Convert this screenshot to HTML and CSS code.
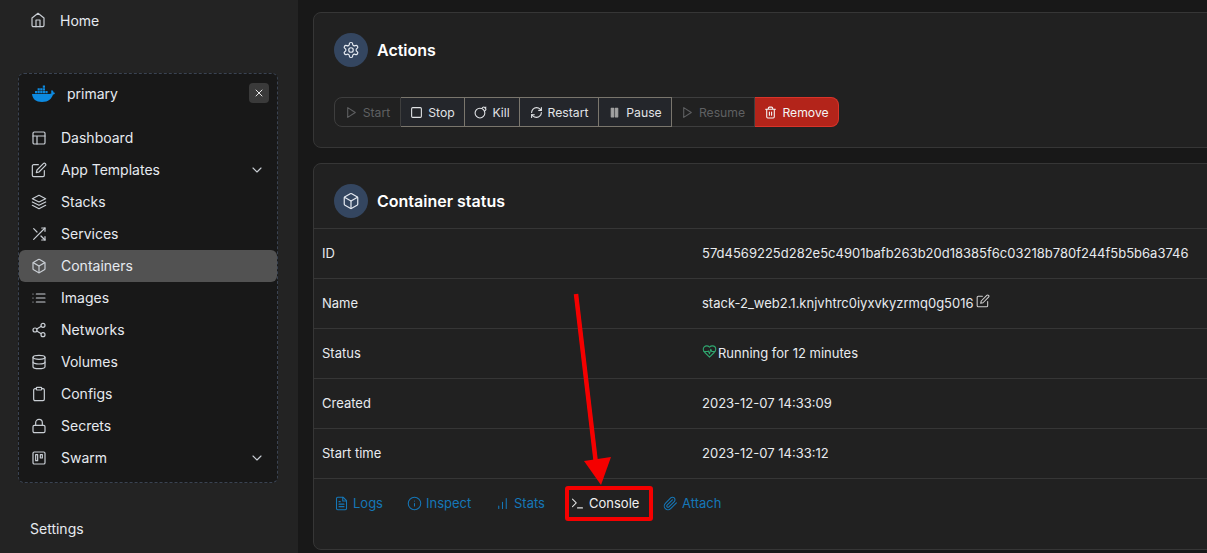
FILE: index.html
```html
<!DOCTYPE html>
<html lang="en">
<head>
<meta charset="utf-8">
<title>Container details</title>
<link rel="stylesheet" href="styles.css">
</head>
<body>
<svg class="sprite" xmlns="http://www.w3.org/2000/svg">
  <symbol id="i-home" viewBox="0 0 24 24"><path d="m3 9 9-7 9 7v11a2 2 0 0 1-2 2H5a2 2 0 0 1-2-2z"/><polyline points="9 22 9 12 15 12 15 22"/></symbol>
  <symbol id="i-layout" viewBox="0 0 24 24"><rect x="3" y="3" width="18" height="18" rx="2"/><path d="M3 9h18M9 21V9"/></symbol>
  <symbol id="i-edit" viewBox="0 0 24 24"><path d="M11 4H4a2 2 0 0 0-2 2v14a2 2 0 0 0 2 2h14a2 2 0 0 0 2-2v-7"/><path d="M18.5 2.5a2.121 2.121 0 0 1 3 3L12 15l-4 1 1-4 9.5-9.5z"/></symbol>
  <symbol id="i-layers" viewBox="0 0 24 24"><path d="m12 2 10 5-10 5L2 7z"/><path d="m2 12 10 5 10-5"/><path d="m2 17 10 5 10-5"/></symbol>
  <symbol id="i-shuffle" viewBox="0 0 24 24"><polyline points="16 3 21 3 21 8"/><line x1="4" y1="20" x2="21" y2="3"/><polyline points="21 16 21 21 16 21"/><line x1="15" y1="15" x2="21" y2="21"/><line x1="4" y1="4" x2="9" y2="9"/></symbol>
  <symbol id="i-box" viewBox="0 0 24 24"><path d="M21 16V8a2 2 0 0 0-1-1.730l-7-4a2 2 0 0 0-2 0l-7 4A2 2 0 0 0 3 8v8a2 2 0 0 0 1 1.730l7 4a2 2 0 0 0 2 0l7-4A2 2 0 0 0 21 16z"/><polyline points="3.270 6.960 12 12.010 20.730 6.960"/><line x1="12" y1="22.080" x2="12" y2="12"/></symbol>
  <symbol id="i-list" viewBox="0 0 24 24"><path d="M8 6h13M8 12h13M8 18h13M3 6h.01M3 12h.01M3 18h.01"/></symbol>
  <symbol id="i-share" viewBox="0 0 24 24"><circle cx="18" cy="5" r="3"/><circle cx="6" cy="12" r="3"/><circle cx="18" cy="19" r="3"/><line x1="8.590" y1="13.510" x2="15.420" y2="17.490"/><line x1="15.410" y1="6.510" x2="8.590" y2="10.490"/></symbol>
  <symbol id="i-database" viewBox="0 0 24 24"><ellipse cx="12" cy="5" rx="9" ry="3"/><path d="M21 12c0 1.660-4 3-9 3s-9-1.340-9-3"/><path d="M3 5v14c0 1.660 4 3 9 3s9-1.340 9-3V5"/></symbol>
  <symbol id="i-clipboard" viewBox="0 0 24 24"><path d="M16 4h2a2 2 0 0 1 2 2v14a2 2 0 0 1-2 2H6a2 2 0 0 1-2-2V6a2 2 0 0 1 2-2h2"/><rect x="8" y="2" width="8" height="4" rx="1"/></symbol>
  <symbol id="i-lock" viewBox="0 0 24 24"><rect x="3" y="11" width="18" height="11" rx="2"/><path d="M7 11V7a5 5 0 0 1 10 0v4"/></symbol>
  <symbol id="i-trello" viewBox="0 0 24 24"><rect x="3" y="3" width="18" height="18" rx="2"/><rect x="7" y="7" width="3" height="9"/><rect x="14" y="7" width="3" height="5"/></symbol>
  <symbol id="i-chevron" viewBox="0 0 24 24"><path d="m6 9 6 6 6-6"/></symbol>
  <symbol id="i-x" viewBox="0 0 24 24"><path d="M18 6 6 18M6 6l12 12"/></symbol>
  <symbol id="i-gear" viewBox="0 0 24 24"><path d="M12.220 2h-.44a2 2 0 0 0-2 2v.18a2 2 0 0 1-1 1.730l-.43.25a2 2 0 0 1-2 0l-.15-.08a2 2 0 0 0-2.730.73l-.22.38a2 2 0 0 0 .73 2.730l.15.1a2 2 0 0 1 1 1.720v.51a2 2 0 0 1-1 1.740l-.15.09a2 2 0 0 0-.73 2.730l.22.38a2 2 0 0 0 2.730.73l.15-.08a2 2 0 0 1 2 0l.43.25a2 2 0 0 1 1 1.730V20a2 2 0 0 0 2 2h.44a2 2 0 0 0 2-2v-.18a2 2 0 0 1 1-1.730l.43-.25a2 2 0 0 1 2 0l.15.08a2 2 0 0 0 2.730-.73l.22-.39a2 2 0 0 0-.73-2.730l-.15-.08a2 2 0 0 1-1-1.740v-.5a2 2 0 0 1 1-1.740l.15-.09a2 2 0 0 0 .73-2.730l-.22-.38a2 2 0 0 0-2.730-.73l-.15.08a2 2 0 0 1-2 0l-.43-.25a2 2 0 0 1-1-1.730V4a2 2 0 0 0-2-2z"/><circle cx="12" cy="12" r="3"/></symbol>
  <symbol id="i-play" viewBox="0 0 24 24"><polygon points="5 3 19 12 5 21 5 3"/></symbol>
  <symbol id="i-square" viewBox="0 0 24 24"><rect x="3" y="3" width="18" height="18" rx="2"/></symbol>
  <symbol id="i-bomb" viewBox="0 0 24 24"><circle cx="11" cy="13" r="9"/><path d="M14.350 4.650 16.300 2.700a2.410 2.410 0 0 1 3.400 0l1.600 1.600a2.400 2.400 0 0 1 0 3.400l-1.950 1.950"/><path d="m22 2-1.500 1.500"/></symbol>
  <symbol id="i-refresh" viewBox="0 0 24 24"><path d="M3 12a9 9 0 0 1 9-9 9.750 9.750 0 0 1 6.740 2.740L21 8"/><path d="M21 3v5h-5"/><path d="M21 12a9 9 0 0 1-9 9 9.750 9.750 0 0 1-6.740-2.740L3 16"/><path d="M8 16H3v5"/></symbol>
  <symbol id="i-pause" viewBox="0 0 24 24"><rect x="6" y="4" width="4.500" height="16" fill="currentColor"/><rect x="13.500" y="4" width="4.500" height="16" fill="currentColor"/></symbol>
  <symbol id="i-trash" viewBox="0 0 24 24"><path d="M3 6h18M19 6v14c0 1-1 2-2 2H7c-1 0-2-1-2-2V6M8 6V4c0-1 1-2 2-2h4c1 0 2 1 2 2v2M10 11v6M14 11v6"/></symbol>
  <symbol id="i-file" viewBox="0 0 24 24"><path d="M14.500 2H6a2 2 0 0 0-2 2v16a2 2 0 0 0 2 2h12a2 2 0 0 0 2-2V7.500L14.500 2z"/><polyline points="14 2 14 8 20 8"/><path d="M16 13H8M16 17H8M10 9H8"/></symbol>
  <symbol id="i-info" viewBox="0 0 24 24"><circle cx="12" cy="12" r="10"/><path d="M12 16v-4M12 8h.01"/></symbol>
  <symbol id="i-bars" viewBox="0 0 24 24"><path d="M12 20V10M18 20V4M6 20v-4"/></symbol>
  <symbol id="i-terminal" viewBox="0 0 24 24"><polyline points="4 17 10 11 4 5"/><line x1="12" y1="19" x2="20" y2="19"/></symbol>
  <symbol id="i-clip" viewBox="0 0 24 24"><path d="m21.440 11.050-9.190 9.190a6 6 0 0 1-8.490-8.490l8.570-8.570A4 4 0 1 1 18 8.840l-8.590 8.570a2 2 0 0 1-2.830-2.830l8.490-8.480"/></symbol>
  <symbol id="i-heart" viewBox="0 0 24 24"><path d="M19 14c1.490-1.460 3-3.210 3-5.500A5.500 5.500 0 0 0 16.500 3c-1.760 0-3 .5-4.500 2-1.500-1.500-2.740-2-4.500-2A5.500 5.500 0 0 0 2 8.500c0 2.300 1.500 4.050 3 5.500l7 7Z"/><path d="M3.220 12H9.500l.5-1 2 4.500 2-7 1.500 3.500h5.270"/></symbol>
</svg>

<div class="app">
  <aside class="sidebar">
    <a class="home-link"><svg class="ico"><use href="#i-home"/></svg><span>Home</span></a>
    <section class="env">
      <header class="env-head">
        <svg class="docker" viewBox="0 0 23 17">
          <path d="M0 9h17.500c.8 0 1.500-.3 2-.7-.5-.8-.5-2.300.3-3.300 1 .6 1.700 1.500 1.800 2.500.6-.2 1.100 0 1.400.5-.4 1-1.200 1.500-2 1.500-1.200 4-4.500 7.500-11 7.500C4 17 .5 14 0 9z"/>
          <path d="M3 6h2.200v2.200H3zM5.600 6h2.200v2.200H5.600zM8.200 6h2.200v2.200H8.200zM10.800 6H13v2.200h-2.200zM13.400 6h2.200v2.200h-2.200zM5.600 3.300h2.200v2.200H5.600zM8.200 3.300h2.200v2.200H8.200zM10.800 3.300H13v2.200h-2.200zM10.800 .6H13v2.200h-2.200z"/>
        </svg>
        <span class="env-name">primary</span>
        <button class="env-close"><svg class="ico-x"><use href="#i-x"/></svg></button>
      </header>
      <nav class="nav">
        <a class="nav-item"><svg class="ico"><use href="#i-layout"/></svg><span>Dashboard</span></a>
        <a class="nav-item"><svg class="ico"><use href="#i-edit"/></svg><span>App Templates</span><svg class="chev"><use href="#i-chevron"/></svg></a>
        <a class="nav-item"><svg class="ico"><use href="#i-layers"/></svg><span>Stacks</span></a>
        <a class="nav-item"><svg class="ico"><use href="#i-shuffle"/></svg><span>Services</span></a>
        <a class="nav-item active"><svg class="ico"><use href="#i-box"/></svg><span>Containers</span></a>
        <a class="nav-item"><svg class="ico"><use href="#i-list"/></svg><span>Images</span></a>
        <a class="nav-item"><svg class="ico"><use href="#i-share"/></svg><span>Networks</span></a>
        <a class="nav-item"><svg class="ico"><use href="#i-database"/></svg><span>Volumes</span></a>
        <a class="nav-item"><svg class="ico"><use href="#i-clipboard"/></svg><span>Configs</span></a>
        <a class="nav-item"><svg class="ico"><use href="#i-lock"/></svg><span>Secrets</span></a>
        <a class="nav-item"><svg class="ico"><use href="#i-trello"/></svg><span>Swarm</span><svg class="chev"><use href="#i-chevron"/></svg></a>
      </nav>
    </section>
    <div class="settings">Settings</div>
  </aside>

  <main class="main">
    <section class="card card-actions">
      <header class="card-head">
        <span class="badge"><svg class="badge-ico"><use href="#i-gear"/></svg></span>
        <h2>Actions</h2>
      </header>
      <div class="btn-group">
        <button class="btn off b-start"><svg><use href="#i-play"/></svg>Start</button>
        <button class="btn b-stop"><svg><use href="#i-square"/></svg>Stop</button>
        <button class="btn b-kill"><svg><use href="#i-bomb"/></svg>Kill</button>
        <button class="btn b-restart"><svg><use href="#i-refresh"/></svg>Restart</button>
        <button class="btn b-pause"><svg><use href="#i-pause"/></svg>Pause</button>
        <button class="btn off b-resume"><svg><use href="#i-play"/></svg>Resume</button>
        <button class="btn danger b-remove"><svg><use href="#i-trash"/></svg>Remove</button>
      </div>
    </section>

    <section class="card card-status">
      <header class="card-head head-status">
        <span class="badge"><svg class="badge-ico"><use href="#i-box"/></svg></span>
        <h2>Container status</h2>
      </header>
      <div class="rows">
        <div class="row"><span>ID</span><span>57d4569225d282e5c4901bafb263b20d18385f6c03218b780f244f5b5b6a3746</span></div>
        <div class="row"><span>Name</span><span class="val-name">stack-2_web2.1.knjvhtrc0iyxvkyzrmq0g5016<svg class="pencil"><use href="#i-edit"/></svg></span></div>
        <div class="row"><span>Status</span><span class="val-status"><svg class="heart"><use href="#i-heart"/></svg>Running for 12 minutes</span></div>
        <div class="row"><span>Created</span><span>2023-12-07 14:33:09</span></div>
        <div class="row"><span>Start time</span><span>2023-12-07 14:33:12</span></div>
      </div>
      <div class="tabs">
        <a class="tab t-logs"><svg><use href="#i-file"/></svg>Logs</a>
        <a class="tab t-inspect"><svg><use href="#i-info"/></svg>Inspect</a>
        <a class="tab t-stats"><svg><use href="#i-bars"/></svg>Stats</a>
        <a class="tab t-console"><svg><use href="#i-terminal"/></svg>Console</a>
        <a class="tab t-attach"><svg><use href="#i-clip"/></svg>Attach</a>
      </div>
    </section>
  </main>
</div>

<div class="highlight"></div>
<svg class="arrow" viewBox="0 0 1207 553">
  <line x1="576" y1="294" x2="596" y2="464"/>
  <polygon points="584,461 611,457 601,485"/>
</svg>
</body>
</html>
```
FILE: styles.css
```css
* { box-sizing: border-box; }
html, body { margin: 0; height: 100%; overflow: hidden; background: #181818; }
body {
  font-family: Inter, "Liberation Sans", sans-serif;
  font-size: 14px;
  color: #e6eaf0;
  position: relative;
}
.sprite { display: none; }
svg { fill: none; stroke: currentColor; stroke-width: 2; stroke-linecap: round; stroke-linejoin: round; flex: none; }

.app { display: flex; height: 553px; }

/* sidebar */
.sidebar {
  width: 298px; flex: none; background: #232323;
  padding: 4px 20px 0 18px;
}
.ico { width: 16px; height: 16px; color: #c9ced4; stroke-width: 1.8; }
.home-link { display: flex; align-items: center; height: 32px; padding-left: 12px; gap: 14px; }
.env {
  margin-top: 37px; height: 410px; background: #181818;
  border: 1px dashed #3a4352; border-radius: 6px; padding: 1px 0 0;
}
.env-head { display: flex; align-items: center; height: 36px; padding: 0 8px 0 13px; }
.docker { width: 23px; height: 17px; fill: #0d8ae0; stroke: none; }
.env-name { margin-left: 12px; flex: 1; }
.env-close {
  width: 20px; height: 20px; padding: 0; border: 0; border-radius: 4px;
  background: #3a3a3a; color: #e6e6e6; display: flex; align-items: center; justify-content: center;
}
.ico-x { width: 12px; height: 12px; }
.nav { margin-top: 11px; display: flex; flex-direction: column; }
.nav-item { display: flex; align-items: center; height: 32px; padding: 0 12px 1px 12px; border-radius: 6px; gap: 14px; }
.nav-item > span { flex: 1; }
.nav-item.active { background: #525252; }
.chev { width: 16px; height: 16px; color: #c9ced4; stroke-width: 1.7; }
.settings { margin-top: 37px; padding-left: 12px; }

/* main */
.main { flex: 1; min-width: 0; overflow: hidden; padding: 12px 0 0 15px; display: flex; flex-direction: column; gap: 15px; }
.card {
  width: 960px; flex: none; background: #212121;
  border: 1px solid #363636; border-radius: 8px;
}
.card-actions { height: 136px; padding: 20px 20px 0; }
.card-status { height: 387px; }
.card-head { display: flex; align-items: center; gap: 9px; height: 34px; }
.head-status { height: 64px; padding: 10px 20px 0; }
.card-head h2 { margin: 0; font-size: 16px; font-weight: 600; color: #fff; }
.badge { width: 34px; height: 34px; border-radius: 50%; background: #344660; display: flex; align-items: center; justify-content: center; color: #e4e9f0; flex: none; }
.badge-ico { width: 18px; height: 18px; stroke-width: 1.6; }

/* action buttons */
.btn-group { display: flex; height: 30px; margin-top: 30px; }
.btn {
  display: flex; align-items: center; justify-content: center; gap: 5px; padding: 0;
  font: 400 12.200px Inter, "Liberation Sans", sans-serif;
  background: #24262b; color: #e1e3e6; border: 1px solid #7a766d; border-left-width: 0;
}
.btn svg { width: 13px; height: 13px; flex: none; }
.btn.off { background: #212121; color: #5f6062; border-color: #3e3e3e; }
.b-start { width: 67px; border-left-width: 1px; border-radius: 8px 0 0 8px; }
.b-stop { width: 64px; }
.b-kill { width: 55px; }
.b-restart { width: 79px; }
.b-pause { width: 73px; }
.b-pause svg { color: #a2a2a2; }
.b-resume { width: 83px; }
.b-remove { width: 84px; border-radius: 0 8px 8px 0; }
.btn.danger { background: #b3241a; border-color: #d9342a; color: #f4f4f4; }

/* rows */
.rows { border-top: 1px solid #363636; }
.row { display: grid; grid-template-columns: 380px 1fr; align-items: center; height: 50px; padding: 0 8px 2px; border-bottom: 1px solid #363636; font-size: 13px; color: #e8ebef; }
.val-name, .val-status { display: flex; align-items: center; }
.pencil { width: 14px; height: 14px; margin: -4px 0 0 2px; color: #d0d0d0; stroke-width: 1.8; }
.heart { width: 15px; height: 15px; margin: -3px 1px 0 0; color: #2fa66f; stroke-width: 1.7; }

/* tabs */
.tabs { display: flex; height: 48px; padding-left: 20px; align-items: center; }
.tab { display: flex; align-items: center; gap: 4px; font-size: 13px; color: #1577b8; }
.tab svg { width: 15px; height: 15px; stroke-width: 1.7; }
.t-logs { width: 73px; }
.t-inspect { width: 88px; }
.t-stats { width: 75px; }
.t-console { width: 93px; color: #f0f0f0; }
.t-console svg { color: #e0e0e0; }

/* annotation overlay */
.highlight {
  position: absolute; left: 565px; top: 486px; width: 88px; height: 35px;
  border: 4px solid #f50000; border-radius: 3px;
}
.arrow { position: absolute; left: 0; top: 0; width: 1207px; height: 553px; pointer-events: none; }
.arrow line { stroke: #f50000; stroke-width: 4.500; stroke-linecap: butt; }
.arrow polygon { fill: #f50000; stroke: none; }
```
